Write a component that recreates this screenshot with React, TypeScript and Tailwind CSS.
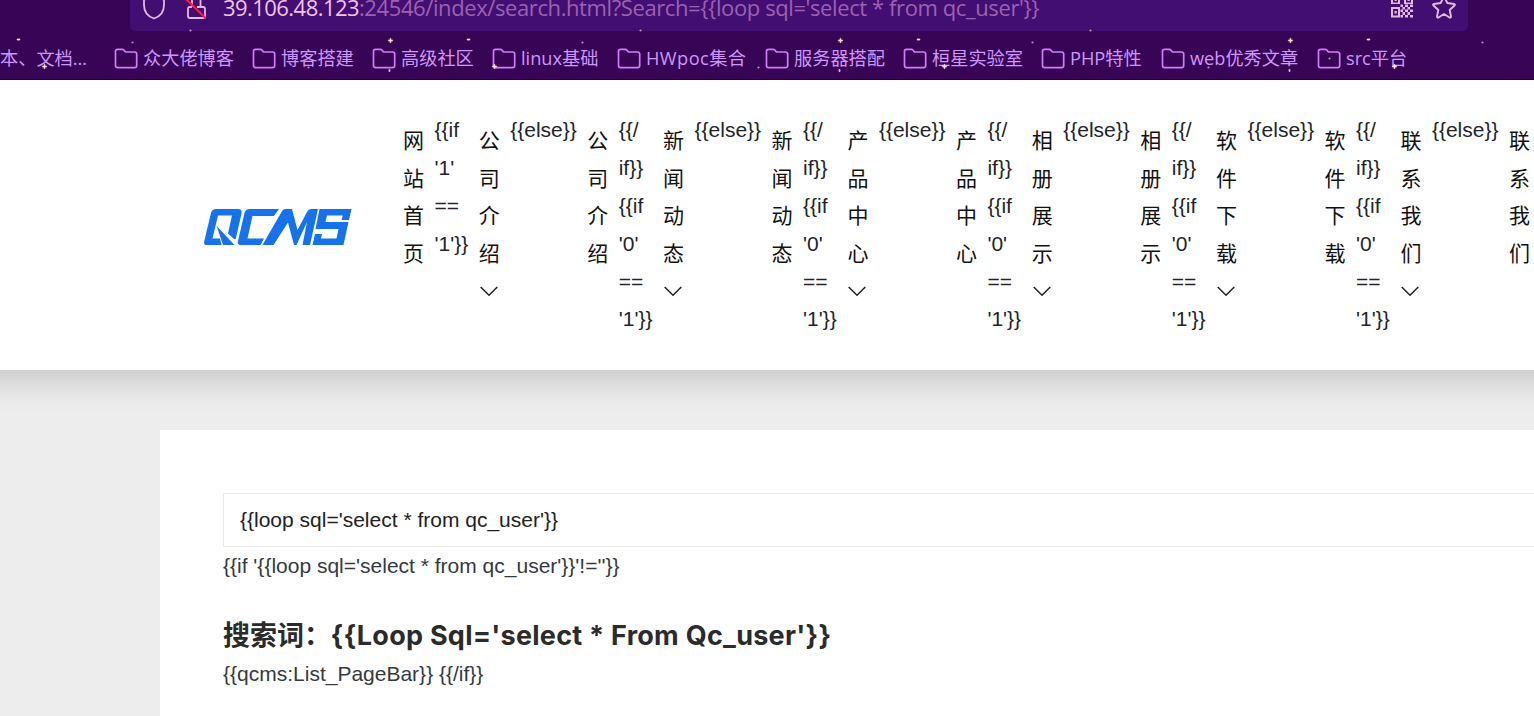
import React from "react";

const tileStarts = [-450, 0, 450, 900, 1350];
const sparkles: [number, number, string][] = [
  [390, 40, "star"], [44, 66, "star"], [18, 39, "dash"], [132, 42, "dot"],
  [190, 30, "dot"], [389, 70, "dash2"], [308, 67, "dot"], [429, 58, "dot"],
];

function Sparkles() {
  return (
    <svg className="pointer-events-none absolute inset-0" width="1534" height="80" fill="#fbe3d4">
      {tileStarts.map((t) =>
        sparkles.map(([x, y, kind]) => (
          <g key={t + "-" + x} transform={`translate(${t + x + 0.5} ${y + 0.5})`}>
            {kind === "star" && (
              <>
                <circle r="2.6" opacity=".25" />
                <path d="M0-3 .8-.8 3 0 .8.8 0 3-.8.8-3 0-.8-.8Z" />
              </>
            )}
            {kind === "dash" && <ellipse rx="1.9" ry="1" />}
            {kind === "dash2" && <ellipse rx="1" ry="1.7" opacity=".8" />}
            {kind === "dot" && <circle r="1.1" opacity=".65" />}
          </g>
        ))
      )}
    </svg>
  );
}

function Folder() {
  return (
    <svg className="shrink-0" width="24" height="22" viewBox="0 0 24 22" fill="none" stroke="#d07dfa" strokeWidth="1.7" strokeLinejoin="round">
      <path d="M1.500 17.500V3.300Q1.500 1.300 3.500 1.300H8.300Q9.200 1.300 9.800 2L11.500 4H20.500Q22.700 4 22.700 6.200V17.500Q22.700 19.700 20.500 19.700H3.700Q1.500 19.700 1.500 17.500Z" />
    </svg>
  );
}

const bookmarks: [string, string, string][] = [
  ["众大佬博客", "w-[138px]", ""], ["博客搭建", "w-[120px]", ""], ["高级社区", "w-[120px]", ""],
  ["linux基础", "w-[125px]", ""], ["HWpoc集合", "w-[148px]", "tracking-[0.45px]"], ["服务器搭配", "w-[138px]", ""],
  ["桓星实验室", "w-[138px]", ""], ["PHP特性", "w-[120px]", ""], ["web优秀文章", "w-[156px]", ""], ["src平台", "w-[120px]", ""],
];

function Browser() {
  return (
    <div className="relative h-20 overflow-hidden border-b border-[#1c0230] bg-[#380455] font-['Open_Sans','Noto_Sans_CJK_SC',sans-serif]">
      <div className="ml-[130px] flex h-[31px] w-[1338px] rounded-b-[5px] bg-[#430e72]">
        <svg className="mt-[-5px] ml-3 shrink-0" width="24" height="26" viewBox="0 0 24 26" fill="none" stroke="#e5b8dc" strokeWidth="1.8">
          <path d="M12 1C9 3 5 4 2 4.500V10C2 17 6 21.500 12 23.500C18 21.500 22 17 22 10V4.500C19 4 15 3 12 1Z" />
        </svg>
        <svg className="mt-[-5px] ml-5 shrink-0" width="22" height="26" viewBox="0 0 22 26" fill="none" stroke="#e5b8dc" strokeWidth="1.8">
          <path d="M6 12V5Q6 1 10 1T14.500 5V11M6 12H3.500Q2 12 2 14V21Q2 23 4 23H17Q19 23 19 21V14Q19 12 17 12H11" />
          <path d="M0 4 20 23.500" stroke="#ff1744" strokeWidth="2" />
        </svg>
        <div className="mt-[-9px] ml-[15px] h-8 w-[1160px] shrink-0 whitespace-pre text-[22px] leading-8 tracking-[-0.4px] text-[#9a62b0]">
          <span className="tracking-[-0.55px] text-[#f0c4e4]">39.106.48.123</span>:24546/index/search.html?Search={"{{loop sql='select * from qc_user'}}"}
        </div>
        <svg className="mt-[-5px] ml-[7px] shrink-0" width="24" height="24" viewBox="0 0 24 24" fill="#e5b8dc">
          <path fillRule="evenodd" d="M1 0H10V9H1ZM3 2V7.500H8V2ZM14 0H23V9H14ZM16 2V7.500H21V2ZM1 12H10V22.500H1ZM3 14V20.500H8V14Z" />
          <path d="M4.500 16H6.800V18.500H4.500ZM4.500 4H6.800V6H4.500ZM17.500 4H19.700V6H17.500Z" />
          <path d="M10.500 9.500H13V12H10.500ZM15 9.500H18V12H15ZM12.500 12H15V14.500H12.500ZM17.500 12H20V14.500H17.500ZM10.500 14.500H13V17H10.500ZM15 14.500H18V17H15ZM20 14.500H23V17H20ZM12.500 17H15V20H12.500ZM17.500 17H20V20H17.500ZM10.500 20H13V22.500H10.500ZM15 20H18V22.500H15ZM20 20H23V22.500H20ZM20 9.500H23V12H20Z" />
        </svg>
        <svg className="mt-[-5px] ml-[17px] shrink-0" width="26" height="26" viewBox="0 0 26 26" fill="none" stroke="#e5b8dc" strokeWidth="1.9" strokeLinejoin="round">
          <path d="M13 1 16.300 8 23 9Q24.500 9.500 23.500 10.500L18.700 15 20 21.500Q20 23 18.500 22.500L13 19 7.500 22.500Q6 23 6 21.500L7.300 15 2.500 10.500Q1.500 9.500 3 9L9.700 8Z" />
        </svg>
      </div>
      <div className="flex h-[49px] items-center text-[18.2px] whitespace-nowrap text-[#ce96fb]">
        <span className="w-[114px] shrink-0 pt-[7px]">本、文档...</span>
        {bookmarks.map(([name, width, tracking]) => (
          <div key={name} className={`${width} flex shrink-0 items-center gap-[5px] pt-[7px]`}>
            <Folder />
            <span className={tracking}>{name}</span>
          </div>
        ))}
      </div>
      <Sparkles />
    </div>
  );
}

function Logo() {
  return (
    <svg className="mt-[129px] ml-[204px] shrink-0" width="148" height="37" viewBox="0 0 148 37" fill="#1672ec">
      <path d="M12 0H34Q38.500 0 37.500 4.500L32 29Q31.500 31 30 30L24 24.500 28 6.500H14L8.500 29.500H16L17.500 36H2Q-.5 36 .3 32L7 4Q8 0 12 0Z" />
      <path d="M12.700 17 30.500 36H19Z" />
      <path d="M46 0H75L70 7H48.500L43.500 29.500H60L56.500 36H37Q33 36 34 32L40.500 4Q41.500 0 46 0Z" />
      <path d="M58.500 36 77.500 3Q79 0 81 0H88L93.500 21 103 3Q104.500 0 107 0H114L106 36H98.500L103 13 92.500 36H90L84 13.500 69.500 36Z" />
      <path d="M115.500 0H147.500L145 11H137.500L138.800 6.500H123L121.500 13H144.500L139.500 36H108.500L111 25H118L117 29.500H132.500L134.500 20H111.500Z" />
    </svg>
  );
}

function VerticalLabel({ text, arrow = false, className }: { text: string; arrow?: boolean; className: string }) {
  return (
    <div className={`${className} shrink-0 pt-[10.500px] text-[21px] text-[#111]`}>
      {[...text].map((c, i) => <div key={i}>{c}</div>)}
      {arrow && (
        <svg className="mt-[13px] ml-px" width="18" height="11" viewBox="0 0 18 11" fill="none" stroke="#222" strokeWidth="1.5">
          <path d="M.7 1 9 9.300 17.300 1" />
        </svg>
      )}
    </div>
  );
}

function Lines({ lines, className }: { lines: string[]; className: string }) {
  return <div className={`${className} shrink-0 pl-[0.500px] whitespace-nowrap`}>{lines.map((l, i) => <div key={i}>{l}</div>)}</div>;
}

const menu = ["公司介绍", "新闻动态", "产品中心", "相册展示", "软件下载", "联系我们"];

export default function App() {
  return (
    <div className="h-[716px] w-[1534px] overflow-hidden bg-[#ededed] font-['Liberation_Sans','Noto_Sans_CJK_SC',sans-serif] text-[#212529]">
      <Browser />
      <header className="flex h-[290px] bg-white shadow-[0_-30px_30px_40px_rgba(0,0,0,0.17)] [clip-path:inset(0_0_-60px_0)]">
        <Logo />
        <nav className="ml-[51px] flex w-[1131px] overflow-hidden pt-[31.400px] text-[21px] leading-[37.8px]">
          <VerticalLabel text="网站首页" className="w-[31px]" />
          <Lines lines={["{{if", "'1'", "==", "'1'}}"]} className="w-[44.700px]" />
          {menu.map((item) => (
            <div key={item} className="flex w-[184.35px] shrink-0">
              <VerticalLabel text={item} arrow className="w-[31px]" />
              <Lines lines={["{{else}}"]} className="w-[77.500px]" />
              <VerticalLabel text={item} className="w-[31px]" />
              <Lines lines={["{{/", "if}}", "{{if", "'0'", "==", "'1'}}"]} className="w-[44.850px]" />
            </div>
          ))}
        </nav>
      </header>
      <main className="mt-[60px] ml-40 h-[286px] bg-white pt-[63px] pl-[63px] text-[21px] leading-[37.8px]">
        <div className="flex h-[54px] items-center border border-r-0 border-[#ebebeb] pl-4 text-[#222]">{"{{loop sql='select * from qc_user'}}"}</div>
        <div className="text-[#333a40]">{"{{if '{{loop sql='select * from qc_user'}}'!=''}}"}</div>
        <h1 className="mt-8 flex h-[38px] items-center font-['Inter','Noto_Sans_CJK_SC',sans-serif] text-[27px] font-bold whitespace-pre text-[#2b2b2b]">
          <span className="w-[107.500px] shrink-0">搜索词：</span>
          <span className="tracking-[0.26px]">{"{{Loop Sql='select * From Qc_user'}}"}</span>
        </h1>
        <div className="text-[#333a40]">{"{{qcms:List_PageBar}} {{/if}}"}</div>
      </main>
    </div>
  );
}
